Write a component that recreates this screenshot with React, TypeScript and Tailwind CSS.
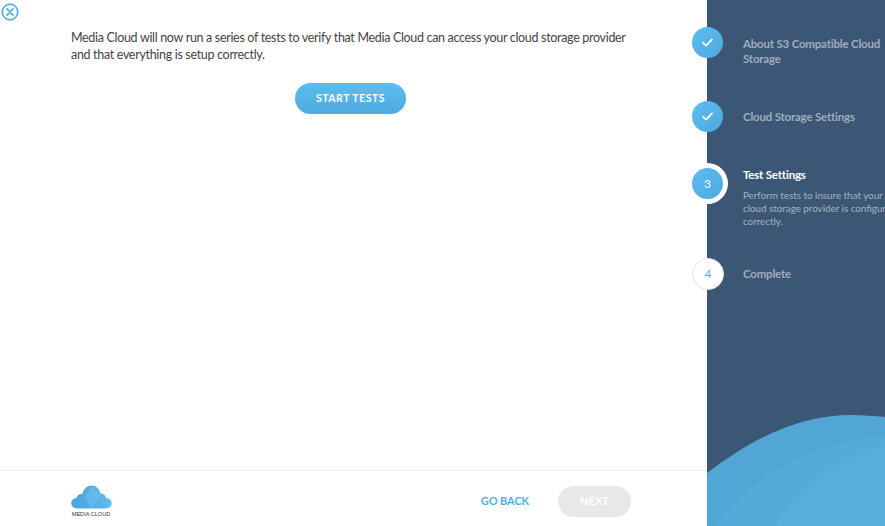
import React from "react";

function Check() {
  return (
    <svg width="13" height="11" viewBox="0 0 13 11" fill="none">
      <path d="M2 5.8l3 2.8L11 2.4" stroke="#fff" strokeWidth="1.8" strokeLinecap="round" strokeLinejoin="round" />
    </svg>
  );
}

function Dot({ children }: { children: React.ReactNode }) {
  return (
    <div className="flex h-[31px] w-[31px] shrink-0 items-center justify-center rounded-full bg-gradient-to-br from-[#5cbdf0] to-[#4fa9de] text-[12px] text-white">
      {children}
    </div>
  );
}

function Logo() {
  return (
    <div className="flex w-[42px] flex-col items-center">
      <svg width="41" height="24" viewBox="0 0 41 24" preserveAspectRatio="none">
        <defs>
          <linearGradient id="lg" x1="0" y1="0" x2="1" y2="0">
            <stop offset="0" stopColor="#4aa3dc" />
            <stop offset="1" stopColor="#5dbcf0" />
          </linearGradient>
        </defs>
        <path
          d="M6 23.5C2.6 23.5 0.3 21 0.3 18.3 0.3 15.4 2.6 13.2 5.6 13 6.4 9.8 9 8.4 11.4 8.8 12.6 3.8 16.2 0.5 20.6 0.5 25 0.5 28.5 3.8 29.4 8.6 32 8.3 34.4 10 35.1 13 38.2 13.2 40.7 15.4 40.7 18.3 40.7 21.2 38.2 23.5 35 23.5Z"
          fill="url(#lg)"
        />
        <path d="M20.6 1 L14 12 L20 23 L29 10Z" fill="#ffffff" opacity="0.1" />
      </svg>
      <span className="mt-[1px] whitespace-nowrap font-['Liberation_Sans',sans-serif] text-[5.6px] leading-[8px] text-[#333]">MEDIA CLOUD</span>
    </div>
  );
}

export default function App() {
  return (
    <div className="flex h-[526px] w-[885px] overflow-hidden bg-white font-['Lato',sans-serif]">
      <main className="relative flex h-full w-[707px] shrink-0 flex-col">
        <button className="absolute left-[1px] top-[3px] text-[#4fb0e6]" aria-label="Close">
          <svg width="18" height="18" viewBox="0 0 18 18" fill="none" stroke="currentColor" strokeWidth="1.7">
            <circle cx="9" cy="9" r="7.8" />
            <path d="M5.9 5.9l6.2 6.2M12.1 5.9l-6.2 6.2" strokeLinecap="round" />
          </svg>
        </button>
        <div className="flex flex-1 flex-col items-center pl-[71px] pr-[77px] pt-[29px]">
          <p className="w-full whitespace-nowrap text-[12.5px] leading-[17px] tracking-[-0.32px] text-[#444]">
            Media Cloud will now run a series of tests to verify that Media Cloud can access your cloud storage provider
            <br />
            and that everything is setup correctly.
          </p>
          <button className="mt-[20px] flex h-[31px] w-[111px] items-center justify-center rounded-full bg-gradient-to-b from-[#5cbcf0] to-[#4eaadf] text-[10.5px] font-bold tracking-[0.5px] text-white">
            START TESTS
          </button>
        </div>
        <footer className="flex h-[56px] items-center justify-between border-t border-[#ececec] pl-[70px] pr-[76px] pt-[6px]">
          <Logo />
          <div className="flex items-center gap-[29px]">
            <span className="text-[11px] font-bold tracking-[-0.1px] text-[#52aee3]">GO BACK</span>
            <button className="flex h-[31px] w-[73px] items-center justify-center rounded-full bg-[#e8e8e8] text-[11px] font-bold text-white">
              NEXT
            </button>
          </div>
        </footer>
      </main>

      <aside className="relative h-full w-[178px] shrink-0 bg-[#3c5675] pt-[27px]">
        <div className="absolute inset-0 overflow-hidden">
          <svg className="absolute bottom-0 left-0" width="178" height="111" viewBox="0 0 178 111">
            <path d="M0 58C50 20 95 0 145 0C155 0 167 1 178 2V111H0Z" fill="#51a6d5" />
            <path d="M8 111C45 60 105 26 178 21V111Z" fill="#54aad9" />
            <path d="M68 111C90 70 130 42 178 31V111Z" fill="#58aedb" />
          </svg>
        </div>

        <ol className="relative">
          <li className="flex h-[74px] items-start">
            <div className="-ml-[15px]"><Dot><Check /></Dot></div>
            <p className="ml-[20px] mt-[9px] whitespace-nowrap text-[11.5px] font-bold leading-[15px] tracking-[-0.2px] text-[#9fadbe]">
              About S3 Compatible Cloud
              <br />
              Storage
            </p>
          </li>
          <li className="flex h-[67px] items-start">
            <div className="-ml-[15px]"><Dot><Check /></Dot></div>
            <p className="ml-[20px] mt-[8px] whitespace-nowrap text-[11.5px] font-bold leading-[15px] tracking-[-0.2px] text-[#9fadbe]">
              Cloud Storage Settings
            </p>
          </li>
          <li className="flex h-[90px] items-start">
            <div className="-ml-[15px] -mt-[5px] flex h-[41px] w-[36px] shrink-0 items-center rounded-r-full bg-white">
              <Dot>3</Dot>
            </div>
            <div className="ml-[15px] -mt-[1px] whitespace-nowrap">
              <p className="text-[11.5px] font-bold leading-[15px] tracking-[-0.2px] text-white">Test Settings</p>
              <p className="mt-[7px] text-[9.8px] leading-[13px] text-[#a5b2c2]">
                Perform tests to insure that your
                <br />
                cloud storage provider is configured
                <br />
                correctly.
              </p>
            </div>
          </li>
          <li className="flex items-start">
            <div className="-ml-[15px] flex h-[32px] w-[32px] shrink-0 items-center justify-center rounded-full border border-[#e4e4e4] bg-white text-[12px] font-medium text-[#5ab4e8]">
              4
            </div>
            <p className="ml-[19px] mt-[8px] text-[11.5px] font-bold leading-[15px] tracking-[-0.2px] text-[#9fadbe]">Complete</p>
          </li>
        </ol>
      </aside>
    </div>
  );
}
